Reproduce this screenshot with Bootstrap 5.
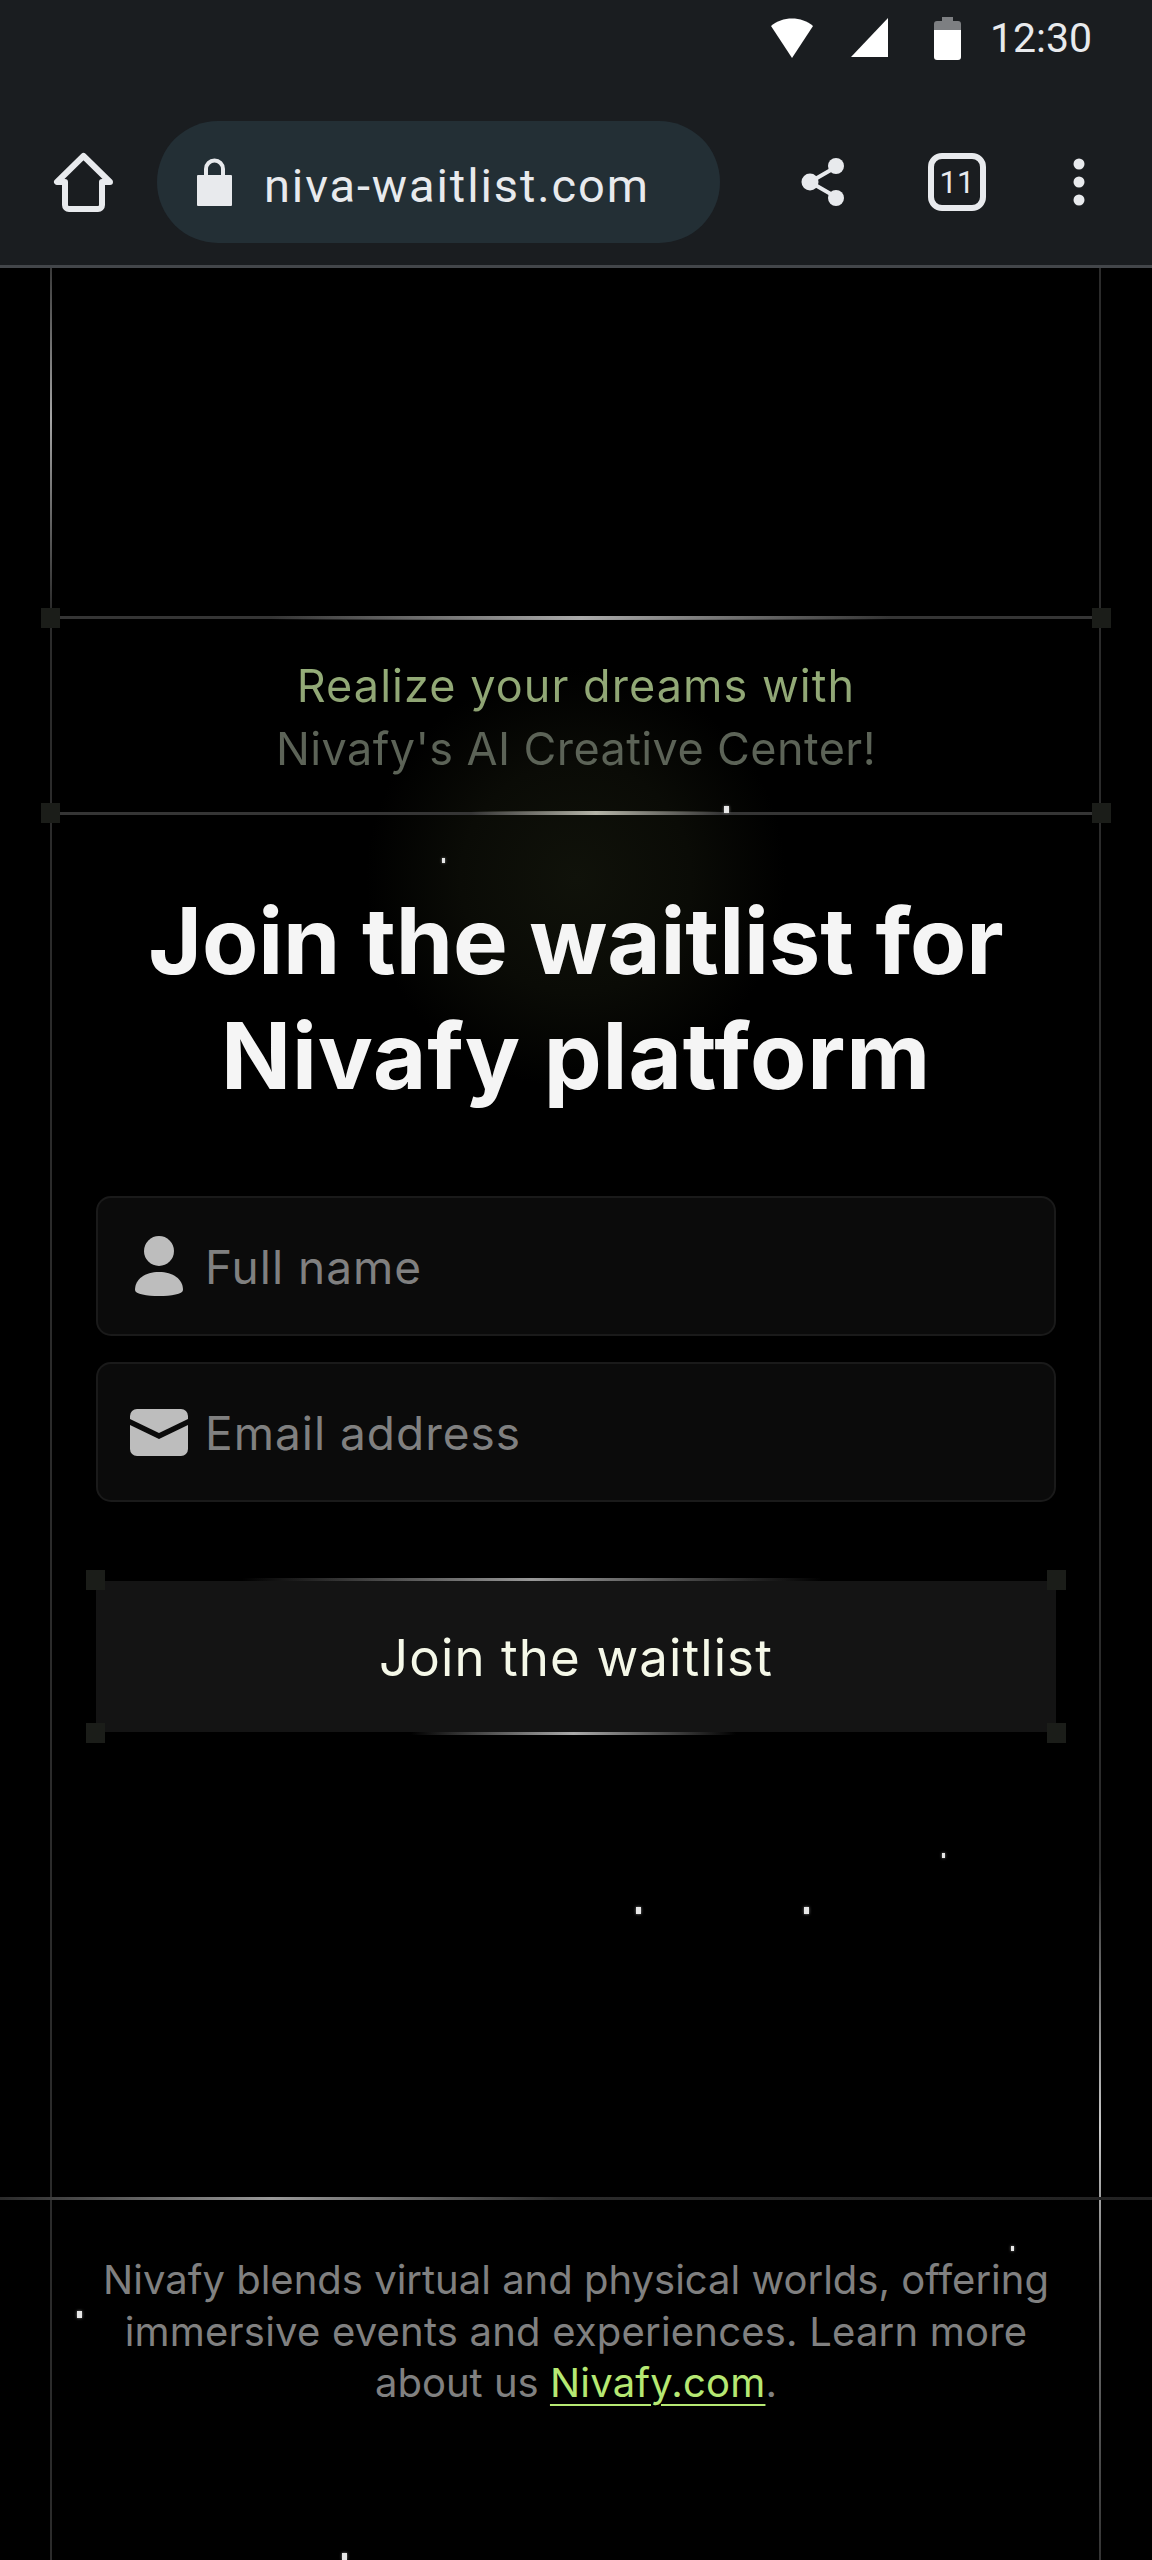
<!DOCTYPE html>
<html lang="en">
  <head>
    <meta charset="UTF-8" />
    <meta name="viewport" content="width=device-width, initial-scale=1.0"/>
    <title>Nivafy waitlist</title>
    <link href="https://cdn.jsdelivr.net/npm/bootstrap@5.3.3/dist/css/bootstrap.min.css" rel="stylesheet"/>
    <style>
      html, body { background: #000; }
      body {
        width: 1152px;
        height: 2560px;
        overflow: hidden;
        font-family: Inter, "Liberation Sans", sans-serif;
      }
      /* browser chrome */
      .chrome {
        height: 268px;
        background: #1a1d20;
        border-bottom: 3px solid #43464a;
        font-family: Roboto, sans-serif;
        color: #e8eaed;
      }
      .status-row { height: 76px; padding-right: 60px; }
      .wifi-ic { margin-right: 37px; }
      .signal-ic { margin-right: 45px; }
      .status-time { font-size: 41px; line-height: 48px; margin-left: 29px; color: #e8eaed; }
      .toolbar-row { height: 122px; margin-top: 45px; padding-left: 53px; }
      .url-pill {
        width: 563px;
        height: 122px;
        margin-left: 43px;
        padding-left: 40px;
        border-radius: 61px;
        background: #232f35;
      }
      .url-text { font-size: 47px; letter-spacing: 1.9px; margin-left: 32px; padding-top: 6px; line-height: 1; }
      .share-ic { margin-left: 81px; }
      .tabs-ic { margin-left: 83px; }
      .dots-ic { margin-left: 86px; }

      /* page */
      .stage { height: 2292px; padding-top: 348px; background: #000; }
      .v-line { position: absolute; top: 0; bottom: 0; width: 2px; }
      .v-left { left: 50px; background: linear-gradient(180deg, #3a3a3a 0, #a5a5a5 150px, #2b2b2b 340px, #2b2b2b 100%); }
      .v-right { left: 1099px; background: linear-gradient(180deg, #2b2b2b 0, #2b2b2b 1600px, #c9c9c9 1860px, #777 2000px, #333 2292px); }
      .glow {
        position: absolute;
        left: 366px;
        top: 400px;
        width: 420px;
        height: 420px;
        background: radial-gradient(ellipse closest-side, #10120a 0, #0a0b06 55%, #000 100%);
      }
      .star { position: absolute; width: 5px; height: 7px; background: #e6e6e6; box-shadow: 0 0 3px #888; }
      .star-sm { width: 3px; height: 5px; }

      .tag-box {
        height: 199px;
        margin: 0 51px;
        border-top: 3px solid #353535;
        border-bottom: 3px solid #353535;
      }
      .glint { position: absolute; height: 4px; }
      .tag-glint-top { left: 220px; width: 620px; top: -3px; background: linear-gradient(90deg, transparent, #aaa 50%, transparent); }
      .tag-glint-bot { left: 420px; width: 250px; bottom: -3px; background: linear-gradient(90deg, transparent, #b4b4a8 50%, transparent); }
      .handle { position: absolute; width: 19px; height: 20px; background: #1b1d19; }
      .tag-text {
        padding-top: 2px;
        font-size: 45px;
        line-height: 63px;
        letter-spacing: 1.05px;
        background: linear-gradient(180deg, #97b27a 0, #8ea273 46%, #5c6357 56%, #5c6357 100%);
        -webkit-background-clip: text;
        background-clip: text;
        color: transparent;
      }
      .tag-second { letter-spacing: 0.4px; }
      .headline {
        margin: 68px 0 0;
        font-size: 92px;
        line-height: 115px;
        font-weight: 700;
        letter-spacing: -0.1px;
        color: #f5f5f5;
      }
      .head-second { letter-spacing: 0.9px; }
      .form-stack { width: 960px; margin: 83px auto 0; }
      .field-box {
        height: 140px;
        margin-bottom: 26px;
        background: #0b0b0b;
        border: 2px solid #1a1a1a;
        border-radius: 15px;
      }
      .field-ic { width: 107px; padding-left: 15px; flex: none; }
      .form-control.field-input {
        background: transparent;
        border: 0;
        box-shadow: none;
        padding: 2px 0 0;
        font-size: 46px;
        letter-spacing: 1px;
        color: #ccc;
      }
      .field-input::placeholder { color: #808080; opacity: 1; }
      .join-wrap { margin-top: 79px; }
      .btn.join-btn {
        height: 151px;
        width: 100%;
        padding-top: 9px;
        font-size: 51px;
        letter-spacing: 1.1px;
        color: #f5f8e8;
        background: #141414;
        border: 0;
        border-radius: 0;
      }
      .join-glint-top { left: 146px; width: 580px; top: -3px; background: linear-gradient(90deg, transparent, #999 50%, transparent); height: 3px; }
      .join-glint-bot { left: 315px; width: 325px; bottom: -3px; background: linear-gradient(90deg, transparent, #aaa 50%, transparent); height: 3px; }
      .foot-rule {
        position: absolute;
        left: 0;
        right: 0;
        top: 1929px;
        height: 3px;
        background: linear-gradient(90deg, #2a2a2a 0, #999 272px, #2b2b2b 560px, #222 100%);
      }
      .foot-text {
        position: absolute;
        left: 0;
        right: 0;
        top: 1986px;
        margin: 0;
        font-size: 40px;
        line-height: 51.5px;
        color: #808080;
      }
      .foot-second { letter-spacing: 0.2px; }
      .foot-text a { color: #b6e873; letter-spacing: 0.2px; text-decoration: underline; text-underline-offset: 7px; text-decoration-thickness: 2px; }
    </style>
  </head>
  <body>
    <header class="chrome">
      <div class="status-row d-flex justify-content-end align-items-center">
        <svg class="wifi-ic" width="44" height="40" viewBox="0 0 44 40"><path d="M1 8C12-2 32-2 43 8L22 40z" fill="#fff"/></svg>
        <svg class="signal-ic" width="38" height="40" viewBox="0 0 38 40"><path d="M37 0V39H0z" fill="#fff"/></svg>
        <svg width="27" height="43" viewBox="0 0 27 43"><path d="M8 0h11v4h5a3 3 0 0 1 3 3v7H0V7a3 3 0 0 1 3-3h5z" fill="#7d7f82"/><path d="M0 13h27v27a3 3 0 0 1-3 3H3a3 3 0 0 1-3-3z" fill="#fff"/></svg>
        <span class="status-time">12:30</span>
      </div>
      <div class="toolbar-row d-flex align-items-center">
        <svg width="61" height="60" viewBox="0 0 61 60"><path d="M30.500 4 4 30h8v23a4 4 0 0 0 4 4h29a4 4 0 0 0 4-4V30h8z" fill="none" stroke="#e8eaed" stroke-width="6" stroke-linejoin="round"/></svg>
        <div class="url-pill d-flex align-items-center">
          <svg width="35" height="48" viewBox="0 0 35 48"><path d="M9 18V11a8.500 8.500 0 0 1 17 0v7" fill="none" stroke="#e8eaed" stroke-width="4"/><rect y="17" width="35" height="31" rx="1" fill="#e8eaed"/></svg>
          <span class="url-text">niva-waitlist.com</span>
        </div>
        <svg class="share-ic" width="44" height="48" viewBox="0 0 44 48"><path d="M35 9 9 24l26 15" fill="none" stroke="#e8eaed" stroke-width="4"/><circle cx="35" cy="8" r="8" fill="#e8eaed"/><circle cx="9" cy="24" r="8.500" fill="#e8eaed"/><circle cx="35" cy="40" r="8" fill="#e8eaed"/></svg>
        <svg class="tabs-ic" width="58" height="58" viewBox="0 0 58 58"><rect x="3" y="3" width="52" height="52" rx="11" fill="none" stroke="#e8eaed" stroke-width="6"/><text x="29" y="40" font-family="Roboto, sans-serif" font-size="31" fill="#e8eaed" text-anchor="middle">11</text></svg>
        <svg class="dots-ic" width="14" height="48" viewBox="0 0 14 48"><circle cx="7" cy="6" r="5.500" fill="#e8eaed"/><circle cx="7" cy="24" r="5.500" fill="#e8eaed"/><circle cx="7" cy="42" r="5.500" fill="#e8eaed"/></svg>
      </div>
    </header>

    <main class="stage position-relative">
      <div class="glow"></div>
      <div class="v-line v-left"></div>
      <div class="v-line v-right"></div>

      <div class="tag-box position-relative text-center d-flex align-items-center justify-content-center">
        <div class="glint tag-glint-top"></div>
        <div class="glint tag-glint-bot"></div>
        <span class="handle" style="left:-10px;top:-11px"></span>
        <span class="handle" style="right:-10px;top:-11px"></span>
        <span class="handle" style="left:-10px;bottom:-11px"></span>
        <span class="handle" style="right:-10px;bottom:-11px"></span>
        <div class="tag-text">Realize your dreams with<br><span class="tag-second">Nivafy's AI Creative Center!</span></div>
      </div>

      <h1 class="headline position-relative text-center">Join the waitlist for<br><span class="head-second">Nivafy platform</span></h1>

      <form class="form-stack position-relative" autocomplete="off">
        <div class="field-box d-flex align-items-center">
          <div class="field-ic d-flex justify-content-center">
            <svg width="48" height="60" viewBox="0 0 48 60"><circle cx="24" cy="15" r="15" fill="#bdbdbd"/><path d="M24 36c14 0 24 7 24 18 0 4-12 6-24 6S0 58 0 54c0-11 10-18 24-18z" fill="#bdbdbd"/></svg>
          </div>
          <input type="text" class="form-control field-input" placeholder="Full name"/>
        </div>
        <div class="field-box d-flex align-items-center">
          <div class="field-ic d-flex justify-content-center">
            <svg width="58" height="47" viewBox="0 0 58 47"><path d="M7 0h44a7 7 0 0 1 7 7v3L29 24 0 10V7a7 7 0 0 1 7-7z" fill="#bdbdbd"/><path d="M0 16 29 30 58 16v24a7 7 0 0 1-7 7H7a7 7 0 0 1-7-7z" fill="#bdbdbd"/></svg>
          </div>
          <input type="email" class="form-control field-input" placeholder="Email address"/>
        </div>
        <div class="join-wrap position-relative">
          <div class="glint join-glint-top"></div>
          <div class="glint join-glint-bot"></div>
          <span class="handle" style="left:-10px;top:-11px"></span>
          <span class="handle" style="right:-10px;top:-11px"></span>
          <span class="handle" style="left:-10px;bottom:-11px"></span>
          <span class="handle" style="right:-10px;bottom:-11px"></span>
          <button type="button" class="btn join-btn">Join the waitlist</button>
        </div>
      </form>

      <div class="foot-rule"></div>
      <p class="foot-text text-center">Nivafy blends virtual and physical worlds, offering<br><span class="foot-second">immersive events and experiences. Learn more</span><br>about us <a href="#">Nivafy.com</a>.</p>

      <span class="star" style="left:724px;top:538px"></span>
      <span class="star star-sm" style="left:442px;top:590px"></span>
      <span class="star star-sm" style="left:942px;top:1585px"></span>
      <span class="star" style="left:636px;top:1639px"></span>
      <span class="star" style="left:804px;top:1639px"></span>
      <span class="star star-sm" style="left:1011px;top:1978px"></span>
      <span class="star" style="left:77px;top:2043px"></span>
      <span class="star" style="left:342px;top:2285px"></span>
    </main>

    <script src="https://cdn.jsdelivr.net/npm/bootstrap@5.3.3/dist/js/bootstrap.bundle.min.js"></script>
  </body>
</html>
